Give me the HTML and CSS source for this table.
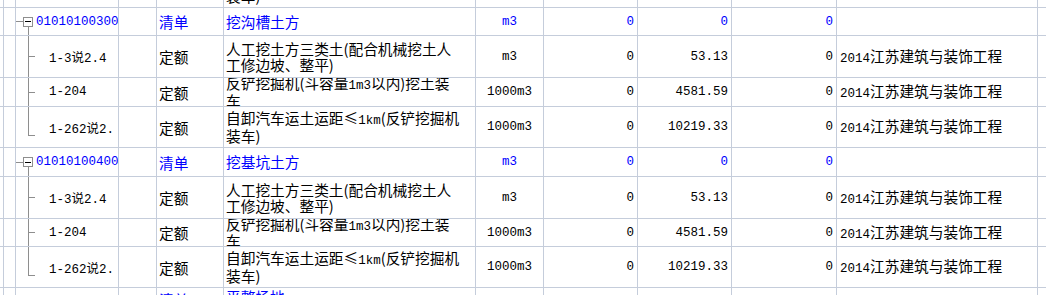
FILE: index.html
```html
<!DOCTYPE html>
<html lang="zh-CN">
<head>
<meta charset="utf-8">
<title>分部分项</title>
<link rel="stylesheet" href="styles.css">
</head>
<body>
<div class="sheet">
  <div class="row r41">
    <div class="cell"></div><div class="cell"></div>
    <div class="cell code"><span class="tree child last"></span><span class="code-text">1-262说2.</span></div>
    <div class="cell"></div>
    <div class="cell kind">定额</div>
    <div class="cell desc"><span class="txt">自卸汽车运土运距≤<span class="m">1km</span>(反铲挖掘机<br>装车)</span></div>
    <div class="cell unit">1000m3</div>
    <div class="cell num">0</div><div class="cell num">10219.33</div><div class="cell num">0</div>
    <div class="cell src"><span class="txt"><span class="m">2014</span>江苏建筑与装饰工程</span></div>
    <div class="cell"></div>
  </div>

  <div class="row r28 bill">
    <div class="cell"></div><div class="cell"></div>
    <div class="cell code"><span class="tree parent"><span class="toggle"></span></span><span class="code-text">010101003001</span></div>
    <div class="cell"></div>
    <div class="cell kind">清单</div>
    <div class="cell desc"><span class="txt">挖沟槽土方</span></div>
    <div class="cell unit">m3</div>
    <div class="cell num">0</div><div class="cell num">0</div><div class="cell num">0</div>
    <div class="cell src"></div>
    <div class="cell"></div>
  </div>
  <div class="row r42">
    <div class="cell"></div><div class="cell"></div>
    <div class="cell code"><span class="tree child"></span><span class="code-text">1-3说2.4</span></div>
    <div class="cell"></div>
    <div class="cell kind">定额</div>
    <div class="cell desc"><span class="txt">人工挖土方三类土(配合机械挖土人<br>工修边坡、整平)</span></div>
    <div class="cell unit">m3</div>
    <div class="cell num">0</div><div class="cell num">53.13</div><div class="cell num">0</div>
    <div class="cell src"><span class="txt"><span class="m">2014</span>江苏建筑与装饰工程</span></div>
    <div class="cell"></div>
  </div>
  <div class="row r29">
    <div class="cell"></div><div class="cell"></div>
    <div class="cell code"><span class="tree child"></span><span class="code-text">1-204</span></div>
    <div class="cell"></div>
    <div class="cell kind">定额</div>
    <div class="cell desc"><span class="txt">反铲挖掘机(斗容量<span class="m">1m3</span>以内)挖土装<br>车</span></div>
    <div class="cell unit">1000m3</div>
    <div class="cell num">0</div><div class="cell num">4581.59</div><div class="cell num">0</div>
    <div class="cell src"><span class="txt"><span class="m">2014</span>江苏建筑与装饰工程</span></div>
    <div class="cell"></div>
  </div>
  <div class="row r41">
    <div class="cell"></div><div class="cell"></div>
    <div class="cell code"><span class="tree child last"></span><span class="code-text">1-262说2.</span></div>
    <div class="cell"></div>
    <div class="cell kind">定额</div>
    <div class="cell desc"><span class="txt">自卸汽车运土运距≤<span class="m">1km</span>(反铲挖掘机<br>装车)</span></div>
    <div class="cell unit">1000m3</div>
    <div class="cell num">0</div><div class="cell num">10219.33</div><div class="cell num">0</div>
    <div class="cell src"><span class="txt"><span class="m">2014</span>江苏建筑与装饰工程</span></div>
    <div class="cell"></div>
  </div>

  <div class="row r29 bill">
    <div class="cell"></div><div class="cell"></div>
    <div class="cell code"><span class="tree parent"><span class="toggle"></span></span><span class="code-text">010101004001</span></div>
    <div class="cell"></div>
    <div class="cell kind">清单</div>
    <div class="cell desc"><span class="txt">挖基坑土方</span></div>
    <div class="cell unit">m3</div>
    <div class="cell num">0</div><div class="cell num">0</div><div class="cell num">0</div>
    <div class="cell src"></div>
    <div class="cell"></div>
  </div>
  <div class="row r42">
    <div class="cell"></div><div class="cell"></div>
    <div class="cell code"><span class="tree child"></span><span class="code-text">1-3说2.4</span></div>
    <div class="cell"></div>
    <div class="cell kind">定额</div>
    <div class="cell desc"><span class="txt">人工挖土方三类土(配合机械挖土人<br>工修边坡、整平)</span></div>
    <div class="cell unit">m3</div>
    <div class="cell num">0</div><div class="cell num">53.13</div><div class="cell num">0</div>
    <div class="cell src"><span class="txt"><span class="m">2014</span>江苏建筑与装饰工程</span></div>
    <div class="cell"></div>
  </div>
  <div class="row r28">
    <div class="cell"></div><div class="cell"></div>
    <div class="cell code"><span class="tree child"></span><span class="code-text">1-204</span></div>
    <div class="cell"></div>
    <div class="cell kind">定额</div>
    <div class="cell desc"><span class="txt">反铲挖掘机(斗容量<span class="m">1m3</span>以内)挖土装<br>车</span></div>
    <div class="cell unit">1000m3</div>
    <div class="cell num">0</div><div class="cell num">4581.59</div><div class="cell num">0</div>
    <div class="cell src"><span class="txt"><span class="m">2014</span>江苏建筑与装饰工程</span></div>
    <div class="cell"></div>
  </div>
  <div class="row r41">
    <div class="cell"></div><div class="cell"></div>
    <div class="cell code"><span class="tree child last"></span><span class="code-text">1-262说2.</span></div>
    <div class="cell"></div>
    <div class="cell kind">定额</div>
    <div class="cell desc"><span class="txt">自卸汽车运土运距≤<span class="m">1km</span>(反铲挖掘机<br>装车)</span></div>
    <div class="cell unit">1000m3</div>
    <div class="cell num">0</div><div class="cell num">10219.33</div><div class="cell num">0</div>
    <div class="cell src"><span class="txt"><span class="m">2014</span>江苏建筑与装饰工程</span></div>
    <div class="cell"></div>
  </div>

  <div class="row rend bill">
    <div class="cell"></div><div class="cell"></div>
    <div class="cell code"></div>
    <div class="cell"></div>
    <div class="cell kind">清单</div>
    <div class="cell desc"><span class="txt">平整场地</span></div>
    <div class="cell unit"></div>
    <div class="cell num"></div><div class="cell num"></div><div class="cell num"></div>
    <div class="cell src"></div>
    <div class="cell"></div>
  </div>
</div>
</body>
</html>
```

FILE: styles.css
```css
* { box-sizing: border-box; }

html, body {
  margin: 0;
  padding: 0;
  background: #fff;
  overflow: hidden;
}

body {
  font-family: "Noto Sans CJK SC", "Noto Sans", sans-serif;
  font-size: 14.7px;
  color: #000;
}

.sheet {
  width: 1046px;
  margin-top: -33px;
}

.row {
  display: grid;
  grid-template-columns: 4px 12px 103px 38px 67px 252px 68px 94px 94px 105px 201px 1fr;
  border-bottom: 1px solid #c5cddb;
}

.r28 { height: 28px; }
.r29 { height: 29px; }
.r41 { height: 41px; }
.r42 { height: 42px; }
.rend { height: 20px; }

.bill { color: #0000ff; }

.cell {
  border-right: 1px solid #c5cddb;
  display: flex;
  align-items: center;
  overflow: hidden;
  white-space: nowrap;
  min-width: 0;
}

.cell:last-child { border-right: none; }

.rend .cell {
  align-items: flex-start;
  padding-top: 1px;
}

.txt {
  display: block;
  flex: none;
  line-height: 16px;
}

.m,
.code,
.unit,
.num {
  font-family: "Liberation Mono", "Noto Sans CJK SC", monospace;
  font-size: 12.5px;
}

.m {
  line-height: 1;
  vertical-align: baseline;
}

.code { align-items: stretch; }

.code-text { align-self: center; }

.tree {
  flex: 0 0 20px;
  display: flex;
  align-items: center;
}

.tree.parent {
  background:
    linear-gradient(#8e8e8e, #8e8e8e) no-repeat 0 50% / 7px 1px,
    linear-gradient(#8e8e8e, #8e8e8e) no-repeat 12px 100% / 1px 50%;
}

.toggle {
  width: 10px;
  height: 10px;
  margin-left: 7px;
  border: 1px solid #8e8e8e;
  background: #fff linear-gradient(#000, #000) no-repeat center / 6px 1px;
}

.tree.child {
  flex-basis: 33px;
  background:
    linear-gradient(#8e8e8e, #8e8e8e) no-repeat 12px 0 / 1px 100%,
    linear-gradient(#8e8e8e, #8e8e8e) no-repeat 12px 50% / 7px 1px;
}

.tree.child.last {
  background:
    linear-gradient(#8e8e8e, #8e8e8e) no-repeat 12px 0 / 1px calc(50% + 9px),
    linear-gradient(#8e8e8e, #8e8e8e) no-repeat 12px calc(50% + 8px) / 7px 1px;
}

.kind { padding-left: 2px; }

.desc { padding-left: 2px; }

.unit { justify-content: center; }

.num {
  justify-content: flex-end;
  padding-right: 3px;
}

.src { padding-left: 3px; }
```
